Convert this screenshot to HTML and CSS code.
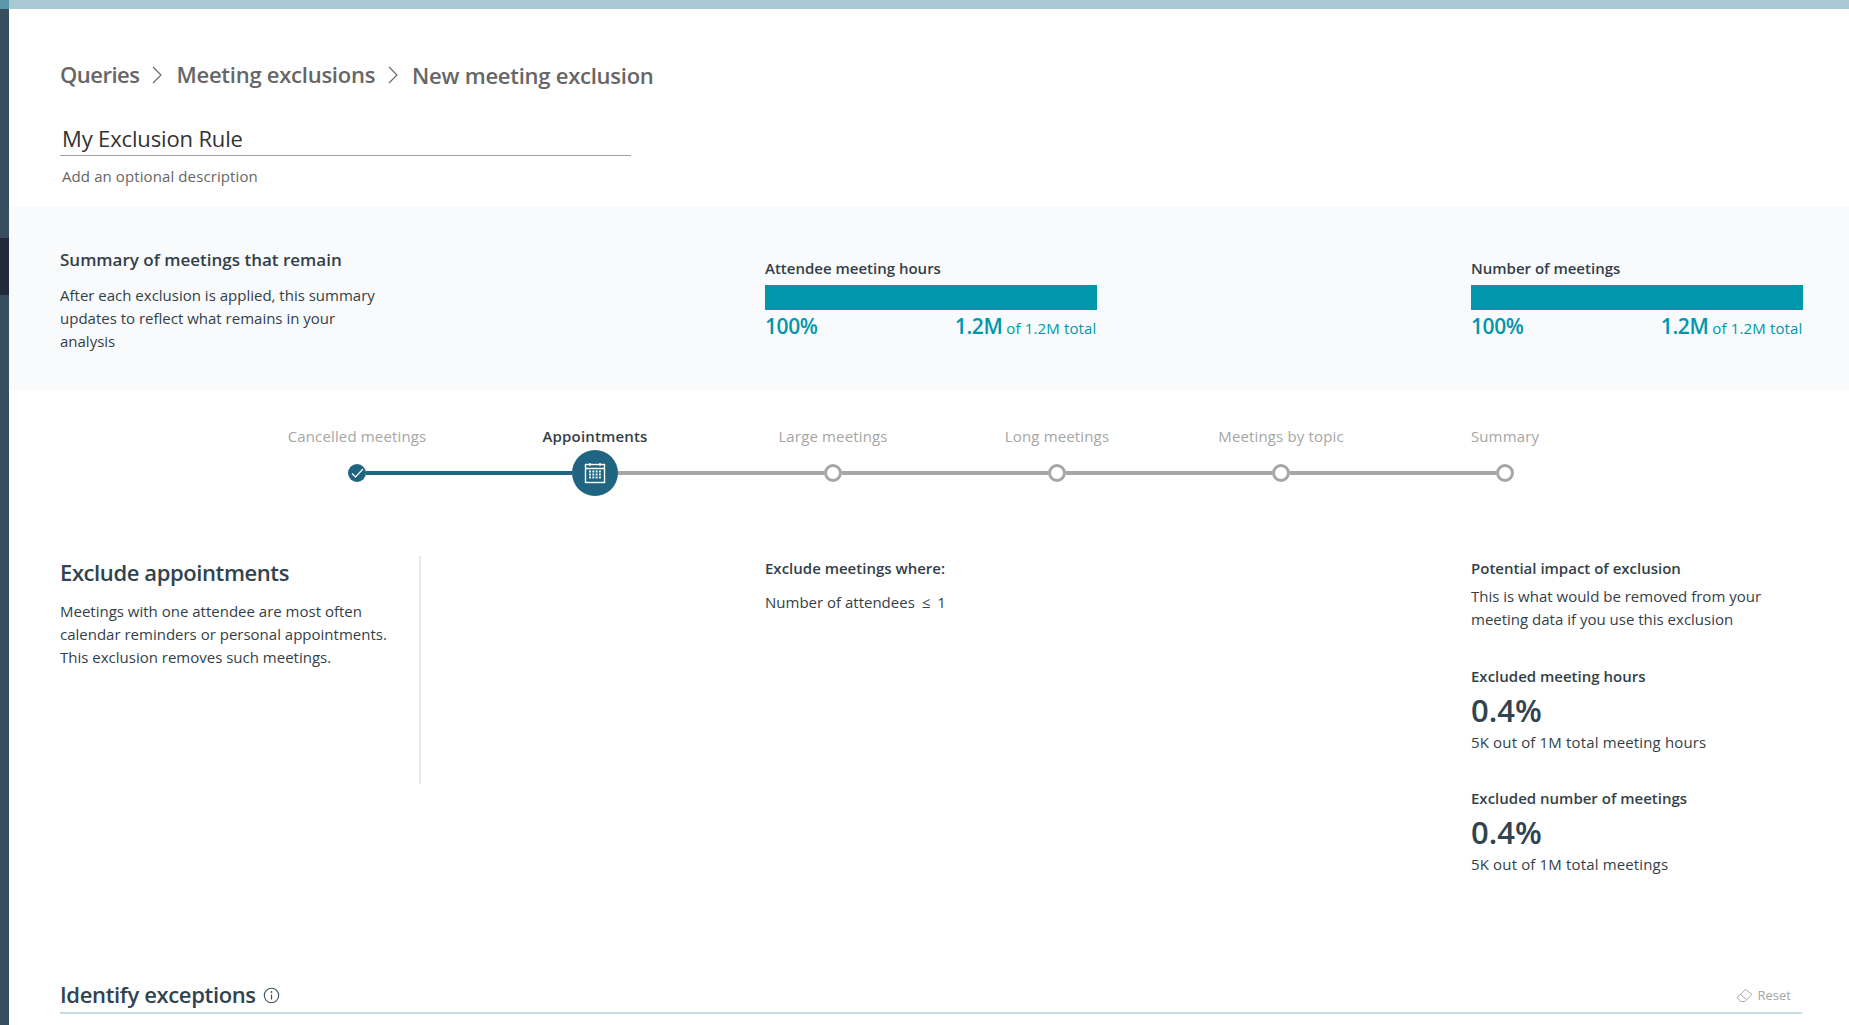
FILE: index.html

```html
<!DOCTYPE HTML>
<html>
<head>
    <meta http-equiv="Content-Type" content="text/html;charset=UTF-8">
    <title>New meeting exclusion</title>
    <link rel="stylesheet" href="styles.css">
</head>
<body>
<div class="app">
    <div class="rail">
        <div class="rail-cap"></div>
        <div class="rail-item"></div>
    </div>
    <div class="main">
        <div class="topbar"></div>

        <div class="crumbs">
            <span class="crumb crumb-first">Queries</span>
            <svg class="chev" width="12" height="20" viewBox="0 0 12 20"><path d="M2 2l8 8-8 8" fill="none" stroke="#666" stroke-width="1.1"/></svg>
            <span class="crumb">Meeting exclusions</span>
            <svg class="chev" width="12" height="20" viewBox="0 0 12 20"><path d="M2 2l8 8-8 8" fill="none" stroke="#666" stroke-width="1.1"/></svg>
            <span class="crumb crumb-last">New meeting exclusion</span>
        </div>

        <div class="name-field">My Exclusion Rule</div>
        <div class="desc-field">Add an optional description</div>

        <div class="band">
            <div class="band-text">
                <h2 class="band-title">Summary of meetings that remain</h2>
                <p class="band-para">After each exclusion is applied, this summary updates to reflect what remains in your analysis</p>
            </div>
            <div class="metric">
                <div class="metric-label">Attendee meeting hours</div>
                <div class="metric-bar"></div>
                <div class="metric-vals">
                    <span class="big">100%</span>
                    <span><span class="big">1.2M</span> <span class="small">of 1.2M total</span></span>
                </div>
            </div>
            <div class="metric">
                <div class="metric-label">Number of meetings</div>
                <div class="metric-bar"></div>
                <div class="metric-vals">
                    <span class="big">100%</span>
                    <span><span class="big">1.2M</span> <span class="small">of 1.2M total</span></span>
                </div>
            </div>
        </div>

        <div class="step-labels">
            <div class="step-label">Cancelled meetings</div>
            <div class="step-label step-current">Appointments</div>
            <div class="step-label">Large meetings</div>
            <div class="step-label">Long meetings</div>
            <div class="step-label">Meetings by topic</div>
            <div class="step-label">Summary</div>
        </div>
        <div class="track">
            <span class="node-done">
                <svg width="18" height="18" viewBox="0 0 18 18"><path d="M4 9.5l3.5 3.5 7.5-8" fill="none" stroke="#fff" stroke-width="1.2"/></svg>
            </span>
            <span class="line line-done"></span>
            <span class="node-current">
                <svg width="24" height="24" viewBox="0 0 24 24">
                    <rect x="2.5" y="3.5" width="19" height="18" fill="none" stroke="#fff" stroke-width="1.4"/>
                    <path d="M2.5 7.5h19M7 2v3M17 2v3" stroke="#fff" stroke-width="1.4" fill="none"/>
                    <path d="M6 10.5h12M6 13.5h12M6 16.5h12" stroke="#e6f6fb" stroke-width="2" stroke-dasharray="2 1.3" fill="none"/>
                </svg>
            </span>
            <span class="line"></span>
            <span class="node"></span>
            <span class="line"></span>
            <span class="node"></span>
            <span class="line"></span>
            <span class="node"></span>
            <span class="line"></span>
            <span class="node"></span>
        </div>

        <div class="content">
            <div class="intro">
                <h2 class="intro-title">Exclude appointments</h2>
                <p class="intro-para">Meetings with one attendee are most often calendar reminders or personal appointments. This exclusion removes such meetings.</p>
            </div>
            <div class="rule">
                <div class="strong">Exclude meetings where:</div>
                <div class="rule-line">Number of attendees <span class="leq">&le;</span> 1</div>
            </div>
            <div class="impact">
                <div class="strong">Potential impact of exclusion</div>
                <p class="impact-para">This is what would be removed from your meeting data if you use this exclusion</p>
                <div class="strong stat-label">Excluded meeting hours</div>
                <div class="stat">0.4%</div>
                <div class="stat-sub">5K out of 1M total meeting hours</div>
                <div class="strong stat-label stat-label-2">Excluded number of meetings</div>
                <div class="stat">0.4%</div>
                <div class="stat-sub">5K out of 1M total meetings</div>
            </div>
        </div>

        <div class="exceptions">
            <h2 class="exceptions-title">Identify exceptions</h2>
            <svg class="info" width="17" height="17" viewBox="0 0 17 17">
                <circle cx="8.5" cy="8.5" r="7.2" fill="none" stroke="#3d5566" stroke-width="1.1"/>
                <path d="M8.5 7.5v5" stroke="#3d5566" stroke-width="1.2"/>
                <circle cx="8.5" cy="5" r="0.9" fill="#3d5566"/>
            </svg>
            <div class="reset">
                <svg width="17" height="15" viewBox="0 0 17 15"><path d="M1 9.5L9.5 1.5 16 6.5 9 13.5H4.5zM4.5 6.5L10.5 11.5" fill="none" stroke="#a8a8a8" stroke-width="1"/></svg>
                <span>Reset</span>
            </div>
        </div>
    </div>
</div>
</body>
</html>
```

FILE: styles.css

```css
* {
    box-sizing: border-box;
}
html, body {
    margin: 0;
    height: 100%;
    overflow: hidden;
    background: #fff;
}
body {
    font: 15px/23px "Open Sans", "Noto Sans", sans-serif;
    color: #333f48;
}
h2, p {
    margin: 0;
}
.app {
    display: flex;
    height: 1025px;
}
.rail {
    width: 9px;
    background: #364e5e;
}
.rail-cap {
    height: 9px;
    background: #5b97a8;
}
.rail-item {
    height: 57px;
    margin-top: 229px;
    background: #22293b;
}
.main {
    flex: 1;
    min-width: 0;
}
.topbar {
    height: 9px;
    background: #a9c9d4;
}

/* header */
.crumbs {
    display: flex;
    align-items: center;
    height: 34px;
    margin: 49px 0 0 51px;
    color: #666;
}
.crumb {
    font-size: 22px;
    font-weight: 600;
    letter-spacing: -0.25px;
    position: relative;
    top: -1px;
}
.crumb-first {
    letter-spacing: -0.5px;
}
.crumb-last {
    top: 0;
}
.chev {
    margin: 0 13px 0 12px;
}
.name-field {
    width: 571px;
    height: 33px;
    margin: 31px 0 0 51px;
    padding-left: 2px;
    border-bottom: 1px solid #a0a0a0;
    font-size: 22px;
    line-height: 30px;
    letter-spacing: -0.15px;
    color: #333;
}
.desc-field {
    margin: 8px 0 0 53px;
    font-size: 15px;
    line-height: 24px;
    letter-spacing: 0.1px;
    color: #666;
}

/* summary band */
.band {
    display: grid;
    grid-template-columns: 705px 706px 331px;
    height: 183px;
    margin-top: 19px;
    padding: 39px 0 0 51px;
    background: #f9fafc;
}
.band-text {
    width: 332px;
}
.band-title {
    font-size: 17px;
    font-weight: 600;
    line-height: 28px;
    color: #333f48;
}
.band-para {
    margin-top: 10px;
    width: 330px;
}
.metric {
    width: 331.5px;
    padding-top: 12px;
}
.metric-label {
    font-size: 15px;
    font-weight: 600;
    line-height: 20px;
}
.metric-bar {
    height: 25px;
    margin-top: 7px;
    background: #0097ad;
}
.metric-vals {
    display: flex;
    justify-content: space-between;
    align-items: baseline;
    margin-top: 1px;
    color: #0097ad;
    line-height: 30px;
}
.big {
    font-size: 21px;
    font-weight: 600;
    letter-spacing: -0.4px;
}
.small {
    font-size: 15px;
    letter-spacing: 0.15px;
}

/* stepper */
.step-labels {
    display: grid;
    grid-template-columns: 224px 252px repeat(4, 224px);
    margin: 34px 0 0 236px;
}
.step-label {
    text-align: center;
    font-size: 15px;
    line-height: 24px;
    letter-spacing: 0.15px;
    color: #a6a6a6;
}
.step-current {
    font-weight: 600;
    color: #333f48;
}
.track {
    display: flex;
    align-items: center;
    height: 46px;
    margin: 2px 0 0 339px;
}
.line {
    width: 206px;
    height: 4px;
    background: #a6a6a6;
}
.line-done {
    background: #1f6480;
}
.node, .node-done, .node-current {
    flex: none;
    display: flex;
    align-items: center;
    justify-content: center;
    border-radius: 50%;
}
.node {
    width: 18px;
    height: 18px;
    border: 3px solid #a6a6a6;
    background: #fff;
}
.node-done {
    width: 18px;
    height: 18px;
    background: #1f6480;
}
.node-current {
    width: 46px;
    height: 46px;
    background: #1f6480;
}

/* main content */
.content {
    display: grid;
    grid-template-columns: 705px 706px 331px;
    height: 400px;
    margin-top: 60px;
    padding-left: 51px;
}
.intro {
    width: 361px;
    height: 228px;
    border-right: 2px solid #e8e8e8;
}
.intro-title {
    font-size: 22px;
    font-weight: 600;
    line-height: 32px;
    letter-spacing: -0.4px;
    color: #31434f;
}
.intro-para {
    margin-top: 12px;
    width: 330px;
}
.rule, .impact {
    padding-top: 1px;
}
.strong {
    font-size: 15px;
    font-weight: 600;
    line-height: 23px;
}
.rule-line {
    margin-top: 11px;
}
.leq {
    margin: 0 3px;
}
.impact-para {
    margin-top: 5px;
}
.stat-label {
    margin-top: 34px;
}
.stat-label-2 {
    margin-top: 33px;
}
.stat {
    font-size: 31px;
    font-weight: 600;
    line-height: 38px;
    margin-top: 3px;
    color: #31434f;
}
.stat-sub {
    margin-top: 2px;
    letter-spacing: 0.15px;
}

/* exceptions header */
.exceptions {
    display: flex;
    align-items: center;
    height: 36px;
    margin: 22px 47px 0 51px;
    border-bottom: 2px solid #c5dbe3;
}
.exceptions-title {
    font-size: 22px;
    font-weight: 600;
    line-height: 32px;
    letter-spacing: -0.35px;
    margin-top: -2px;
    color: #31434f;
}
.info {
    margin-left: 7px;
}
.reset {
    display: flex;
    align-items: center;
    gap: 5px;
    margin-left: auto;
    margin-right: 11px;
    font-size: 13px;
    color: #a6a6a6;
}
```
